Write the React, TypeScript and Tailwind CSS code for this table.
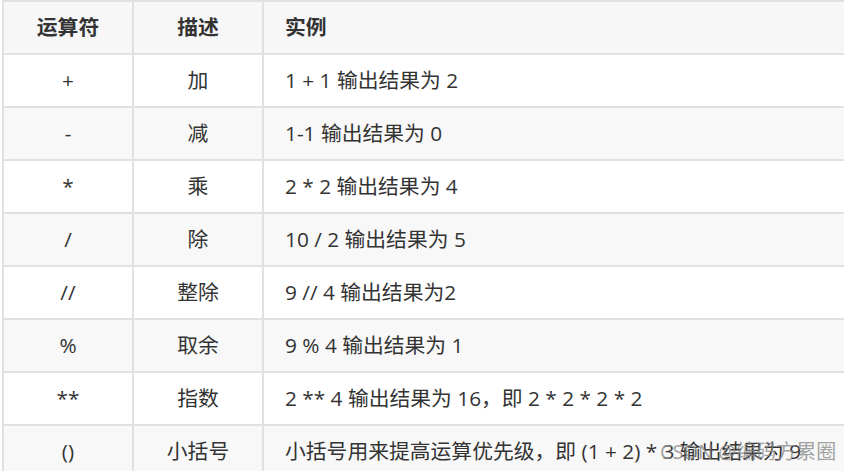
const rows: [string, string, string][] = [
  ["+", "加", "1 + 1 输出结果为 2"],
  ["-", "减", "1-1 输出结果为 0"],
  ["*", "乘", "2 * 2 输出结果为 4"],
  ["/", "除", "10 / 2 输出结果为 5"],
  ["//", "整除", "9 // 4 输出结果为2"],
  ["%", "取余", "9 % 4 输出结果为 1"],
  ["**", "指数", "2 ** 4 输出结果为 16，即 2 * 2 * 2 * 2"],
  ["()", "小括号", "小括号用来提高运算优先级，即 (1 + 2) * 3 输出结果为 9"],
];

const cell = "h-[53px] flex items-center border-r-2 border-b-2 border-[#dfe2e5]";

export default function App() {
  return (
    <div
      className="relative w-[844px] h-[471px] overflow-hidden bg-white text-[#333] text-[20.8px]"
      style={{ fontFamily: '"Open Sans", "Noto Sans CJK SC", sans-serif' }}
    >
      <div className="ml-[2px] w-[1000px] border-l-2 border-t-2 border-[#dfe2e5]">
        <div className="grid grid-cols-[130px_130px_1fr] bg-[#f7f7f7] font-bold">
          <div className={`${cell} justify-center`}>运算符</div>
          <div className={`${cell} justify-center`}>描述</div>
          <div className={`${cell} pl-[21px]`}>实例</div>
        </div>
        {rows.map(([op, desc, ex], i) => (
          <div
            key={op}
            className={`grid grid-cols-[130px_130px_1fr] ${i % 2 === 1 ? "bg-[#f8f8f8]" : "bg-white"}`}
          >
            <div className={`${cell} justify-center`}>{op}</div>
            <div className={`${cell} justify-center`}>{desc}</div>
            <div className={`${cell} pl-[21px] whitespace-nowrap`}>{ex}</div>
          </div>
        ))}
      </div>
      {/* watermark sits over the last row, as in the screenshot */}
      <div className="absolute left-[660px] top-[438px] text-[20px] leading-[28px] text-[#8a8a8a]/80 whitespace-nowrap">
        CSDN @编码方累圈
      </div>
    </div>
  );
}
